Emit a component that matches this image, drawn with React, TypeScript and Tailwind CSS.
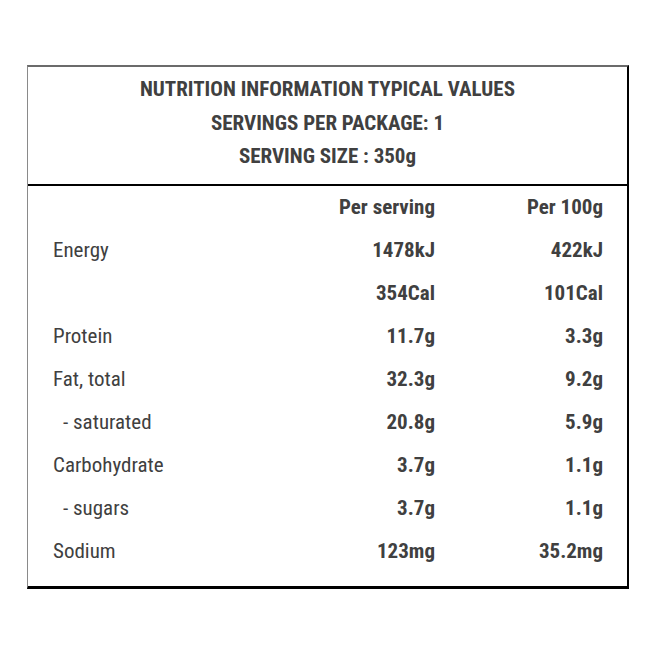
const rows: { label: string; serving: string; per100: string }[] = [
  { label: "Energy", serving: "1478kJ", per100: "422kJ" },
  { label: "", serving: "354Cal", per100: "101Cal" },
  { label: "Protein", serving: "11.7g", per100: "3.3g" },
  { label: "Fat, total", serving: "32.3g", per100: "9.2g" },
  { label: "  - saturated", serving: "20.8g", per100: "5.9g" },
  { label: "Carbohydrate", serving: "3.7g", per100: "1.1g" },
  { label: "  - sugars", serving: "3.7g", per100: "1.1g" },
  { label: "Sodium", serving: "123mg", per100: "35.2mg" },
];

export default function App() {
  return (
    <div
      className="w-[653px] h-[653px] bg-white pt-[65px] pl-[27px] text-[#404040]"
      style={{ fontFamily: '"Roboto Condensed", "Liberation Sans Narrow", "DejaVu Sans Condensed", Roboto, sans-serif' }}
    >
      <div className="w-[602px] h-[524px] border-t-2 border-l border-t-[#6b6b6b] border-l-[#8a8a8a] border-r-2 border-r-black border-b-[3px] border-b-black">
        {/* Header */}
        <div className="h-[119px] border-b-2 border-black flex flex-col items-center pt-[6px] text-[21px] font-bold leading-[33.5px]">
          <div>NUTRITION INFORMATION TYPICAL VALUES</div>
          <div>SERVINGS PER PACKAGE: 1</div>
          <div>SERVING SIZE : 350g</div>
        </div>

        {/* Table */}
        <div className="text-[21px]">
          <div className="flex h-[43px] items-center font-bold">
            <div className="w-[274px]" />
            <div className="w-[133px] text-right">Per serving</div>
            <div className="w-[168px] text-right">Per 100g</div>
          </div>
          {rows.map((r, i) => (
            <div key={i} className="flex h-[43.1px] items-center">
              <div className={`w-[274px] ${r.label.startsWith("  ") ? "pl-[35px]" : "pl-[25px]"}`}>
                {r.label.trim()}
              </div>
              <div className="w-[133px] text-right font-bold">{r.serving}</div>
              <div className="w-[168px] text-right font-bold">{r.per100}</div>
            </div>
          ))}
        </div>
      </div>
    </div>
  );
}
